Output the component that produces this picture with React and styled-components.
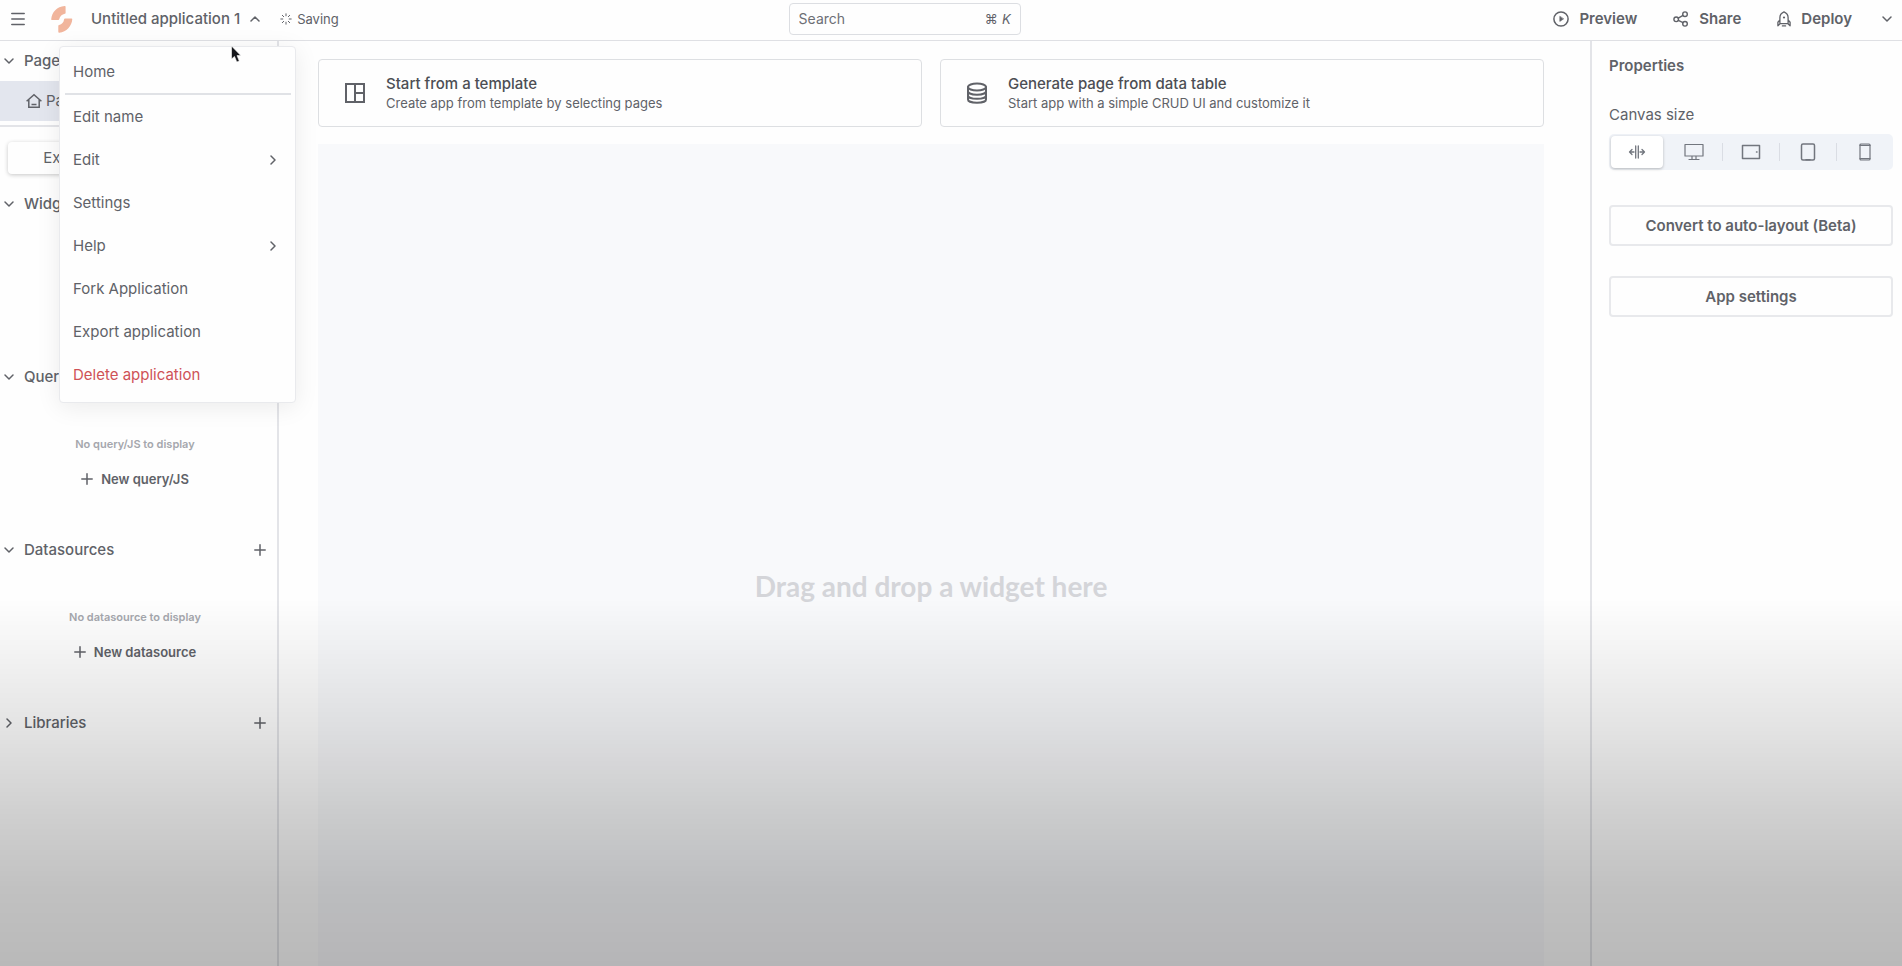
import React from "react";
import styled, { createGlobalStyle, css } from "styled-components";

const Global = createGlobalStyle`
  *, *::before, *::after { box-sizing: border-box; }
  html, body, #root { height: 100%; }
  body {
    margin: 0;
    background: #fefefe;
    color: #606268;
    font-family: Inter, "Liberation Sans", sans-serif;
    font-size: 15px;
    line-height: 20px;
    overflow: hidden;
  }
  button, input { font: inherit; color: inherit; }
  button { background: none; border: 0; padding: 0; margin: 0; }
  h2, p, ul { margin: 0; padding: 0; font: inherit; }
  ul { list-style: none; }
`;

const Svg = styled.svg`
  display: block;
  flex: none;
  fill: none;
  stroke: currentColor;
  stroke-width: ${(p) => p.$weight || 1.5};
  stroke-linecap: ${(p) => p.$cap || "round"};
  stroke-linejoin: ${(p) => (p.$cap ? "miter" : "round")};
`;

const Icon = ({ w = 16, h, weight, cap, children }) => (
  <Svg width={w} height={h || w} viewBox={`0 0 ${w} ${h || w}`} $weight={weight} $cap={cap} aria-hidden="true">
    {children}
  </Svg>
);

const ChevronDown = () => <Icon w={12}><path d="M2 4l4 4 4-4" /></Icon>;
const ChevronUp = () => <Icon w={12}><path d="M2 8l4-4 4 4" /></Icon>;
const ChevronRight = () => <Icon w={12}><path d="M4 2l4 4-4 4" /></Icon>;
const Plus = () => <Icon w={12}><path d="M6 .8v10.4M.8 6h10.4" /></Icon>;
const MenuLines = () => (
  <Icon w={14}><path d="M.8 1.500h12.400M.8 7h12.400M.8 12.500h12.400" /></Icon>
);
const LogoSvg = styled.svg`
  display: block;
  fill: #f1b59c;
`;
const Logo = () => (
  <LogoSvg width="24" height="28" viewBox="0 0 24 28" aria-hidden="true">
    <path d="M1.200 14.200C1.800 7 7 1.600 14.600.9c.600-.1 1 .300 1 .9v6.100c0 .500-.300.8-.8.9-2.800.5-4.900 2.600-5.600 5.400-.1.500-.4.700-.9.700H2.100c-.6 0-1-.2-.9-.7z" />
    <path d="M22.300 14C21.800 21.300 16.600 26.900 9.300 27.700c-.600.1-1-.300-1-.9v-5.900c0-.500.300-.8.8-.9 2.800-.6 4.600-2.700 5-5.800.1-.500.400-.8.900-.8h6.400c.600 0 .9.200.9.600z" />
  </LogoSvg>
);
const Spinner = () => (
  <Icon w={12} weight={1}>
    <path d="M6 .8v2M6 9.200v2M.8 6h2M9.200 6h2M2.300 2.300l1.400 1.400M8.300 8.300l1.400 1.400M2.300 9.700l1.400-1.400M8.300 3.700l1.400-1.400" />
  </Icon>
);
const House = () => (
  <Icon w={16} cap="butt">
    <path d="M2.800 6.800v7.500h10.400V6.800M.6 8.300L8 1.700l7.400 6.600M5.500 11.500h5" />
  </Icon>
);
const Play = () => (
  <Icon w={16}><circle cx="8" cy="8" r="7.100" /><path d="M6.800 5.600v4.800L10.400 8z" fill="currentColor" strokeWidth=".6" /></Icon>
);
const ShareIcon = () => (
  <Icon w={16} weight={1.4}>
    <circle cx="3.200" cy="8.300" r="2.300" /><circle cx="12" cy="3.200" r="2.300" /><circle cx="12" cy="12.800" r="2.300" />
    <path d="M5.300 7.100l4.700-2.700M5.300 9.400l4.700 2.300" />
  </Icon>
);
const Rocket = () => (
  <Icon w={14} h={16} weight={1.300}>
    <path d="M2.900 12.600V6.400C2.900 3.900 4.700 2 7 .9c2.300 1.100 4.100 3 4.100 5.500v6.200zM2.900 9L.9 11.200v3.600l2.400-2.200M11.100 9l2 2.200v3.600l-2.400-2.200M5.400 14.900h3.200" />
    <circle cx="7" cy="6.500" r="1.100" fill="currentColor" stroke="none" />
  </Icon>
);
const TemplateIcon = () => (
  <Icon w={22} weight={2} cap="butt"><path d="M2 2h18v18H2zM11 2v18M11 11h9" /></Icon>
);
const Database = () => (
  <Icon w={22} weight={2}>
    <ellipse cx="11" cy="5" rx="9" ry="3.600" />
    <path d="M2 5v12.400c0 2 4 3.300 9 3.300s9-1.300 9-3.300V5M2 9.300c0 2 4 3.400 9 3.400s9-1.400 9-3.400M2 13.400c0 2 4 3.400 9 3.400s9-1.400 9-3.400" />
  </Icon>
);
const Fluid = () => (
  <Icon w={18} h={14} weight={1.300}>
    <path d="M7.700 1v12M10.300 1v12" /><path d="M6 7H1.500M4 4.500L1.500 7 4 9.500M12 7h4.500M14 4.500L16.500 7 14 9.500" />
  </Icon>
);
const Desktop = () => (
  <Icon w={20} h={18} weight={1.200}>
    <path d="M1 1.500h18v11.500H1zM8 13v3M12 13v3M5 16.500h10" />
  </Icon>
);
const TabletWide = () => (
  <Icon w={20} h={16} weight={1.500}><path d="M1.500 1.500h17v13h-17zM15.500 8h.5" /></Icon>
);
const Tablet = () => (
  <Icon w={16} h={18} weight={1.500}><rect x="1.500" y="1" width="13" height="16" rx="1.500" /><path d="M6 16.700h4" /></Icon>
);
const Phone = () => (
  <Icon w={12} h={18} weight={1.200}><rect x="1" y="1" width="10" height="16" rx="1" /><path d="M1 2.400h10M1 15.600h10" /></Icon>
);

const Page = styled.div`
  display: flex;
  flex-direction: column;
  min-height: 100%;
`;

const Header = styled.header`
  display: grid;
  grid-template-columns: 17fr 232px 19fr;
  align-items: center;
  height: 41px;
  padding-bottom: 3px;
  border-bottom: 1px solid #dfe0e4;
`;

const HeaderLeft = styled.div`
  display: flex;
  align-items: center;
  padding-left: 11px;
`;

const IconButton = styled.button`
  display: flex;
  align-items: center;
  justify-content: center;
`;

const LogoLink = styled.a`
  margin: 0 17px 0 25px;
`;

const AppName = styled.button`
  display: flex;
  align-items: center;
  gap: 9px;
  font-size: 15px;
  font-weight: 500;
`;

const Status = styled.span`
  display: flex;
  align-items: center;
  gap: 5px;
  margin-left: 19px;
  font-size: 13px;
`;

const SearchBox = styled.label`
  display: flex;
  align-items: center;
  height: 32px;
  padding: 0 9px;
  border: 1px solid #dcdee2;
  border-radius: 4px;
  font-size: 14px;
`;

const SearchInput = styled.input`
  flex: 1;
  min-width: 0;
  padding: 0;
  border: 0;
  outline: 0;
  background: none;
  &::placeholder { color: #6d6f75; opacity: 1; }
`;

const Shortcut = styled.kbd`
  display: flex;
  gap: 4px;
  font-family: inherit;
  font-size: 13px;
`;

const HeaderRight = styled.div`
  display: flex;
  align-items: center;
  justify-content: flex-end;
  padding-right: 9px;
`;

const HeaderAction = styled.button`
  display: flex;
  align-items: center;
  gap: 10px;
  margin-right: ${(p) => (p.$last ? 29 : 36)}px;
  font-size: 15px;
  font-weight: 600;
`;

const Body = styled.div`
  display: flex;
  flex: 1;
`;

const Sidebar = styled.nav`
  width: 279px;
  flex: none;
  border-right: 2px solid #e3e4e8;
`;

const SectionHead = styled.div`
  display: flex;
  align-items: center;
  justify-content: space-between;
  height: 40px;
  padding: 0 11px 0 3px;
`;

const SectionToggle = styled.button`
  display: flex;
  align-items: center;
  gap: 9px;
  font-size: 15px;
  font-weight: 500;
`;

const SectionBody = styled.div`
  display: flex;
  flex-direction: column;
  align-items: center;
  gap: 15px;
  height: 133px;
  margin-right: 7px;
  padding-top: 37px;
`;

const EmptyText = styled.p`
  color: #a5a7ad;
  font-size: 11px;
  font-weight: 600;
`;

const AddButton = styled.button`
  display: flex;
  align-items: center;
  gap: 8px;
  font-size: 13px;
  font-weight: 600;
`;

const PageRow = styled.a`
  display: flex;
  align-items: center;
  gap: 4px;
  height: 40px;
  margin-bottom: 4px;
  padding-left: 26px;
  background: #e3e6ee;
  color: inherit;
  text-decoration: none;
`;

const Tabs = styled.div`
  display: flex;
  height: 59px;
  padding: 15px 10px 10px 8px;
  border-top: 2px solid #e3e4e8;
`;

const Tab = styled.button`
  flex: 1;
  border-radius: 4px;
  font-size: 15px;
  ${(p) => p.$active && css`box-shadow: 0 1px 4px rgba(0, 0, 0, 0.22);`}
`;

const Main = styled.main`
  display: flex;
  flex: 1;
  flex-direction: column;
  min-width: 0;
  padding: 18px 46px 0 39px;
`;

const Cards = styled.div`
  display: grid;
  grid-template-columns: 1fr 1fr;
  gap: 18px;
  margin-bottom: 17px;
`;

const Card = styled.button`
  display: flex;
  align-items: center;
  gap: 20px;
  height: 68px;
  padding: 0 25px;
  border: 1px solid #dddfe2;
  border-radius: 4px;
  text-align: left;
`;

const CardTitle = styled.span`
  display: block;
  color: #4c4e54;
  font-size: 15px;
  font-weight: 500;
`;

const CardNote = styled.span`
  display: block;
  font-size: 13px;
  line-height: 18px;
`;

const Canvas = styled.section`
  display: flex;
  flex: 1;
  align-items: center;
  justify-content: center;
  background: #f8f9fb;
  color: #d4d5d9;
  font-family: Lato, "Open Sans", sans-serif;
  font-size: 28px;
  font-weight: 700;
  line-height: 36px;
`;

const CanvasHint = styled.p`
  margin-top: 62px;
`;

const Panel = styled.aside`
  width: 312px;
  flex: none;
  padding: 15px 9px 0 17px;
  border-left: 2px solid #e3e4e8;
`;

const PanelTitle = styled.h2`
  margin-bottom: 29px;
  font-size: 15px;
  font-weight: 600;
`;

const FieldLabel = styled.p`
  margin-bottom: 9px;
  font-size: 15px;
`;

const Segments = styled.div`
  display: grid;
  grid-template-columns: 1fr repeat(4, 1px 1fr);
  height: 36px;
  margin-bottom: 35px;
  padding: 2px 0;
  border-radius: 5px;
  background: #f0f3f8;
  color: #72767e;
`;

const Segment = styled.button`
  display: flex;
  align-items: center;
  justify-content: center;
  border-radius: 4px;
  ${(p) => p.$active && css`
    margin: 0 2px;
    background: #fff;
    box-shadow: 0 1px 3px rgba(0, 0, 0, 0.25);
  `}
`;

const SegmentRule = styled.span`
  margin: 7px 0;
  background: ${(p) => (p.$hidden ? "transparent" : "#dadde4")};
`;

const PanelButton = styled.button`
  display: block;
  width: 100%;
  height: 41px;
  margin-bottom: 30px;
  border: 2px solid #e8e9ec;
  border-radius: 4px;
  font-size: 15px;
  font-weight: 600;
`;

const Menu = styled.ul`
  position: absolute;
  top: 46px;
  left: 59px;
  z-index: 2;
  width: 237px;
  padding: 3px 4px 6px 5px;
  border: 1px solid #e9eaed;
  border-radius: 4px;
  background: #fefefe;
  box-shadow: 0 4px 24px rgba(0, 0, 0, 0.08);
`;

const MenuEntry = styled.li`
  ${(p) => p.$ruled && css`border-bottom: 2px solid #e0e2e6;`}
`;

const MenuItem = styled.button`
  display: flex;
  align-items: center;
  justify-content: space-between;
  width: 100%;
  height: 43px;
  padding: 0 12px 0 8px;
  color: ${(p) => (p.$danger ? "#cf5257" : "inherit")};
  font-size: 15px;
`;

const Pointer = styled.svg`
  position: absolute;
  top: 45px;
  left: 230px;
  z-index: 3;
`;

const Shade = styled.div`
  position: fixed;
  inset: 0;
  z-index: 4;
  pointer-events: none;
  background: linear-gradient(
    rgba(0, 0, 0, 0) 62%,
    rgba(0, 0, 0, 0.03) 66%,
    rgba(0, 0, 0, 0.1) 75%,
    rgba(0, 0, 0, 0.18) 84%,
    rgba(0, 0, 0, 0.24) 92%,
    rgba(0, 0, 0, 0.27) 100%
  );
`;

const menuItems = [
  { label: "Home", ruled: true },
  { label: "Edit name" },
  { label: "Edit", more: true },
  { label: "Settings" },
  { label: "Help", more: true },
  { label: "Fork Application" },
  { label: "Export application" },
  { label: "Delete application", danger: true },
];

const sections = [
  { title: "Widgets", empty: "No widget to display", add: "New widget" },
  { title: "Queries/JS", empty: "No query/JS to display", add: "New query/JS" },
  { title: "Datasources", empty: "No datasource to display", add: "New datasource" },
  { title: "Libraries" },
];

const sizes = [
  { label: "Fluid width", Glyph: Fluid },
  { label: "Desktop", Glyph: Desktop },
  { label: "Tablet landscape", Glyph: TabletWide },
  { label: "Tablet", Glyph: Tablet },
  { label: "Mobile", Glyph: Phone },
];

export default function App() {
  return (
    <Page>
      <Global />
      <Header>
        <HeaderLeft>
          <IconButton aria-label="Toggle sidebar"><MenuLines /></IconButton>
          <LogoLink href="#home" aria-label="Home"><Logo /></LogoLink>
          <AppName>Untitled application 1<ChevronUp /></AppName>
          <Status><Spinner />Saving</Status>
        </HeaderLeft>
        <SearchBox>
          <SearchInput placeholder="Search" aria-label="Search" />
          <Shortcut><span>⌘</span><i>K</i></Shortcut>
        </SearchBox>
        <HeaderRight>
          <HeaderAction><Play />Preview</HeaderAction>
          <HeaderAction><ShareIcon />Share</HeaderAction>
          <HeaderAction $last><Rocket />Deploy</HeaderAction>
          <IconButton aria-label="Deploy options"><ChevronDown /></IconButton>
        </HeaderRight>
      </Header>

      <Body>
        <Sidebar>
          <SectionHead>
            <SectionToggle><ChevronDown />Pages</SectionToggle>
          </SectionHead>
          <PageRow href="#page1"><House />Page1</PageRow>
          <Tabs>
            <Tab $active>Explorer</Tab>
            <Tab>Widgets</Tab>
          </Tabs>
          {sections.map((s) => (
            <div key={s.title}>
              <SectionHead>
                <SectionToggle>{s.empty ? <ChevronDown /> : <ChevronRight />}{s.title}</SectionToggle>
                <IconButton aria-label={`Add to ${s.title}`}><Plus /></IconButton>
              </SectionHead>
              {s.empty && (
                <SectionBody>
                  <EmptyText>{s.empty}</EmptyText>
                  <AddButton><Plus />{s.add}</AddButton>
                </SectionBody>
              )}
            </div>
          ))}
        </Sidebar>

        <Main>
          <Cards>
            <Card>
              <TemplateIcon />
              <span>
                <CardTitle>Start from a template</CardTitle>
                <CardNote>Create app from template by selecting pages</CardNote>
              </span>
            </Card>
            <Card>
              <Database />
              <span>
                <CardTitle>Generate page from data table</CardTitle>
                <CardNote>Start app with a simple CRUD UI and customize it</CardNote>
              </span>
            </Card>
          </Cards>
          <Canvas><CanvasHint>Drag and drop a widget here</CanvasHint></Canvas>
        </Main>

        <Panel>
          <PanelTitle>Properties</PanelTitle>
          <FieldLabel id="canvas-size">Canvas size</FieldLabel>
          <Segments role="group" aria-labelledby="canvas-size">
            {sizes.map(({ label, Glyph }, i) => (
              <React.Fragment key={label}>
                {i > 0 && <SegmentRule $hidden={i === 1} />}
                <Segment $active={i === 0} aria-label={label}><Glyph /></Segment>
              </React.Fragment>
            ))}
          </Segments>
          <PanelButton>Convert to auto-layout (Beta)</PanelButton>
          <PanelButton>App settings</PanelButton>
        </Panel>
      </Body>

      <Menu>
        {menuItems.map((m) => (
          <MenuEntry key={m.label} $ruled={m.ruled}>
            <MenuItem $danger={m.danger}>{m.label}{m.more && <ChevronRight />}</MenuItem>
          </MenuEntry>
        ))}
      </Menu>
      <Pointer width="12" height="19" viewBox="0 0 12 19" aria-hidden="true">
        <path d="M1.500 1v13l3-2.600 2.300 5.600 2.500-1-2.300-5.400h3.800z" fill="#15161a" stroke="#fff" strokeWidth=".6" />
      </Pointer>
      <Shade />
    </Page>
  );
}
